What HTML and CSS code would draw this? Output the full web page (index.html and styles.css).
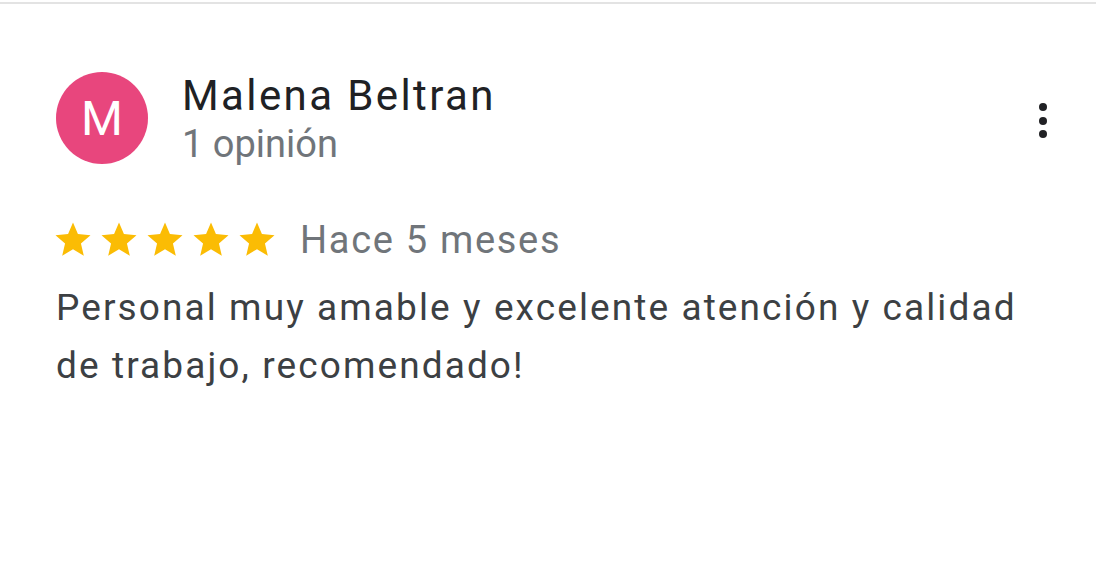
FILE: index.html
```html
<!DOCTYPE html>
<html lang="es">
<head>
<meta charset="utf-8">
<link rel="stylesheet" href="styles.css">
</head>
<body>
<div class="divider"></div>
<article class="review">
  <header class="review-head">
    <div class="avatar">M</div>
    <div class="author">
      <div class="author-name">Malena Beltran</div>
      <div class="author-meta">1 opinión</div>
    </div>
    <button class="menu" aria-label="Más opciones">
      <span class="dot"></span><span class="dot"></span><span class="dot"></span>
    </button>
  </header>
  <div class="rating-row">
    <div class="stars">
      <svg class="star" viewBox="0 0 24 24"><path d="M12 17.27L18.18 21l-1.64-7.03L22 9.24l-7.19-.61L12 2 9.19 8.63 2 9.24l5.46 4.73L5.82 21z"/></svg>
      <svg class="star" viewBox="0 0 24 24"><path d="M12 17.27L18.18 21l-1.64-7.03L22 9.24l-7.19-.61L12 2 9.19 8.63 2 9.24l5.46 4.73L5.82 21z"/></svg>
      <svg class="star" viewBox="0 0 24 24"><path d="M12 17.27L18.18 21l-1.64-7.03L22 9.24l-7.19-.61L12 2 9.19 8.63 2 9.24l5.46 4.73L5.82 21z"/></svg>
      <svg class="star" viewBox="0 0 24 24"><path d="M12 17.27L18.18 21l-1.64-7.03L22 9.24l-7.19-.61L12 2 9.19 8.63 2 9.24l5.46 4.73L5.82 21z"/></svg>
      <svg class="star" viewBox="0 0 24 24"><path d="M12 17.27L18.18 21l-1.64-7.03L22 9.24l-7.19-.61L12 2 9.19 8.63 2 9.24l5.46 4.73L5.82 21z"/></svg>
    </div>
    <span class="date">Hace 5 meses</span>
  </div>
  <p class="review-text">Personal muy amable y excelente atención y calidad de trabajo, recomendado!</p>
</article>
</body>
</html>
```

FILE: styles.css
```css
html, body {
  margin: 0;
  padding: 0;
  background: #ffffff;
}
body {
  font-family: Roboto, "Liberation Sans", Arial, sans-serif;
  width: 1096px;
  height: 569px;
  overflow: hidden;
}
.divider {
  height: 2px;
  margin-top: 2px;
  background: #e3e3e3;
}
.review {
  padding: 68px 46px 0 56px;
}
.review-head {
  display: flex;
  align-items: flex-start;
}
.avatar {
  width: 92px;
  height: 92px;
  border-radius: 50%;
  background: #e8467d;
  color: #ffffff;
  font-size: 48px;
  display: flex;
  align-items: center;
  justify-content: center;
  flex-shrink: 0;
}
.author {
  margin-left: 34px;
  flex: 1;
  padding-top: 0;
}
.author-name {
  font-size: 42px;
  line-height: 48px;
  color: #202124;
  letter-spacing: 2.4px;
}
.author-meta {
  font-size: 38px;
  line-height: 48px;
  color: #70757a;
}
.menu {
  border: 0;
  background: none;
  padding: 0;
  margin-top: 31px;
  width: 14px;
  display: flex;
  flex-direction: column;
  align-items: center;
  gap: 5.5px;
}
.dot {
  width: 8px;
  height: 8px;
  border-radius: 50%;
  background: #202124;
}
.rating-row {
  display: flex;
  align-items: center;
  margin-top: 50px;
}
.stars {
  display: flex;
  gap: 4px;
  margin-left: -4px;
}
.star {
  width: 42px;
  height: 42px;
  fill: #fbbc04;
}
.date {
  margin-left: 22px;
  font-size: 38px;
  letter-spacing: 1.7px;
  color: #70757a;
}
.review-text {
  margin: 17px 0 0;
  font-size: 37px;
  line-height: 58px;
  letter-spacing: 2.1px;
  color: #3c4043;
}
```
